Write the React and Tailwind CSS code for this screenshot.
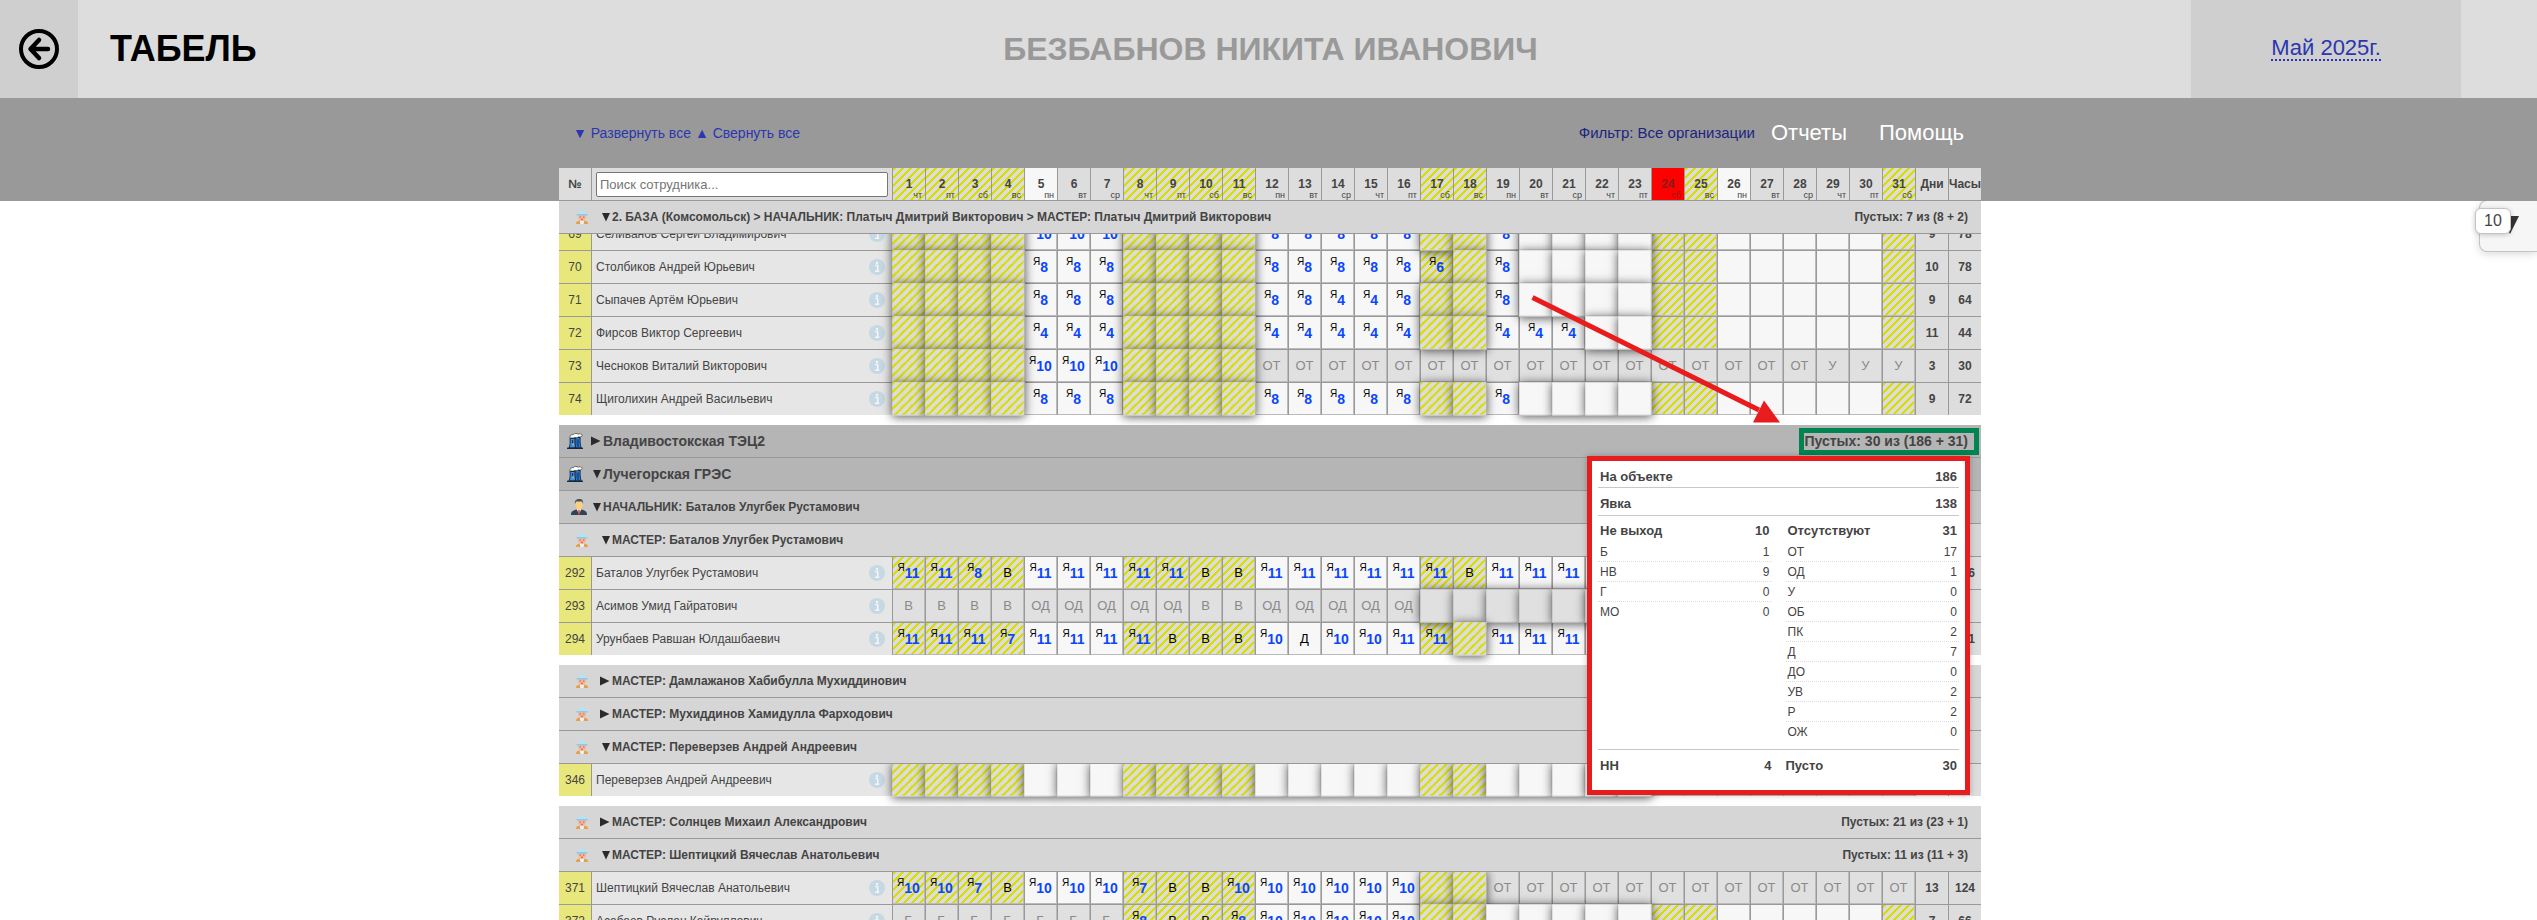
import React from "react";

const HATCH =
  "bg-[linear-gradient(135deg,#d9dd00_20%,#dddddd_20%,#dddddd_50%,#d9dd00_50%,#d9dd00_70%,#dddddd_70%)] bg-[length:8px_8px]";
const OFF_DAYS = [1, 2, 3, 4, 8, 9, 10, 11, 17, 18, 24, 25, 31];
const WEEK = ["пн", "вт", "ср", "чт", "пт", "сб", "вс"];
const DAYS = Array.from({ length: 31 }, (_, i) => i + 1);

const rep = (value, count) => Array(count).fill(value);

// Cell codes: number = hours worked, "*" = missing mark, "-" = future day,
// "~*" / "~" prefix = greyed out day, other letters = absence code.
const GROUP_A = [
  { n: 69, name: "Селиванов Сергей Владимирович", d: 9, h: 78, c: [...rep("*", 4), 10, 10, 10, ...rep("*", 4), ...rep(8, 5), "*", "*", 8, ...rep("*", 4), ...rep("-", 8)] },
  { n: 70, name: "Столбиков Андрей Юрьевич", d: 10, h: 78, c: [...rep("*", 4), 8, 8, 8, ...rep("*", 4), ...rep(8, 5), 6, "*", 8, ...rep("*", 4), ...rep("-", 8)] },
  { n: 71, name: "Сыпачев Артём Юрьевич", d: 9, h: 64, c: [...rep("*", 4), 8, 8, 8, ...rep("*", 4), 8, 8, 4, 4, 8, "*", "*", 8, ...rep("*", 4), ...rep("-", 8)] },
  { n: 72, name: "Фирсов Виктор Сергеевич", d: 11, h: 44, c: [...rep("*", 4), 4, 4, 4, ...rep("*", 4), ...rep(4, 5), "*", "*", 4, 4, 4, "*", "*", ...rep("-", 8)] },
  { n: 73, name: "Чесноков Виталий Викторович", d: 3, h: 30, c: [...rep("*", 4), 10, 10, 10, ...rep("*", 4), ...rep("~ОТ", 17), ...rep("~У", 3)] },
  { n: 74, name: "Щиголихин Андрей Васильевич", d: 9, h: 72, c: [...rep("*", 4), 8, 8, 8, ...rep("*", 4), ...rep(8, 5), "*", "*", 8, ...rep("*", 4), ...rep("-", 8)] },
];
const GROUP_B = [
  { n: 292, name: "Баталов Улугбек Рустамович", d: 19, h: 206, c: [11, 11, 8, "В", ...rep(11, 5), "В", "В", ...rep(11, 6), "В", ...rep(11, 5), ...rep("-", 8)] },
  { n: 293, name: "Асимов Умид Гайратович", d: 0, h: 0, c: [...rep("~В", 4), ...rep("~ОД", 5), "~В", "~В", ...rep("~ОД", 5), ...rep("~*", 7), ...rep("~", 8)] },
  { n: 294, name: "Урунбаев Равшан Юлдашбаевич", d: 18, h: 191, c: [11, 11, 11, 7, ...rep(11, 4), "В", "В", "В", 10, "Д", 10, 10, 11, 11, "*", ...rep(11, 5), ...rep("-", 8)] },
];
const GROUP_C = [
  { n: 346, name: "Переверзев Андрей Андреевич", d: 0, h: 0, c: [...rep("*", 23), ...rep("-", 8)] },
];
const GROUP_D = [
  { n: 371, name: "Шептицкий Вячеслав Анатольевич", d: 13, h: 124, c: [10, 10, 7, "В", 10, 10, 10, 7, "В", "В", ...rep(10, 6), "*", "*", ...rep("~ОТ", 13)] },
  { n: 372, name: "Асабаев Руслан Кайруллович", d: 7, h: 66, c: [...rep("~Б", 7), 8, "В", "В", 8, ...rep(10, 5), ...rep("*", 7), ...rep("-", 8)] },
];

function BackIcon() {
  return (
    <svg viewBox="0 0 42 42" className="h-[42px] w-[42px]" fill="none" stroke="#000" strokeLinecap="round" strokeLinejoin="round">
      <circle cx="21" cy="21" r="18" strokeWidth="4" />
      <path d="M30 21H13M21 12L12.500 21L21 30" strokeWidth="4.500" />
    </svg>
  );
}

function PlantIcon() {
  return (
    <svg viewBox="0 0 16 16" className="h-4 w-4">
      <path d="M2 15C3.200 12 3.400 9 3 5.500H8C7.700 9 8 12 9 15Z" fill="#3a92e8" stroke="#10243c" strokeWidth=".9" />
      <path d="M8.200 15C9 12 9 8 8.600 4.500H13.200C12.900 8 13.200 12 14.200 15Z" fill="#2a7ad2" stroke="#10243c" strokeWidth=".9" />
      <path d="M5.500 7V10M11 6.500V14" stroke="#0b3c80" strokeWidth="1.300" />
      <path d="M3 5.500C2.600 2.500 4.500 1.200 6.200 1.700C7.500 0 10 .2 11 1.200C12.500 .4 15 .8 15.200 2.300C14.800 4.200 12.500 4 11.500 3.800C10.500 5 8.800 4.800 8 4.200C6.500 5.800 4.500 4.200 3 5.500Z" fill="#fff" stroke="#222" strokeWidth=".6" />
      <path d="M0 15.300H16" stroke="#10243c" strokeWidth="1.300" />
      <circle cx="6.300" cy="11.500" r="1" fill="#e8a33a" />
    </svg>
  );
}

function ChiefIcon() {
  return (
    <svg viewBox="0 0 16 16" className="h-4 w-4">
      <path d="M0 16C0 12 2 11.500 5.500 10.500H10.500C14 11.500 16 12 16 16Z" fill="#2f4358" />
      <path d="M5.700 10L8 15.500L10.300 10Z" fill="#fff" />
      <path d="M7.300 11H8.700L9 15.500H7Z" fill="#d33c3c" />
      <path d="M4.500 3.500C4.500 1 11.500 1 11.500 3.500V6.500C11.500 9 9.500 11 8 11S4.500 9 4.500 6.500Z" fill="#f9cf80" />
      <path d="M4 5C3.400 1.500 5 0 8.500 0C11.500 0 12.600 2 12 5L11.200 2.600H5.200Z" fill="#45545e" />
    </svg>
  );
}

function WorkerIcon() {
  return (
    <svg viewBox="0 0 14 16" className="h-4 w-[14px]">
      <path d="M1 15C1 12.500 2.500 12 4.500 11.500L7 13.500L9.500 11.500C11.500 12 13 12.500 13 15Z" fill="#f39a2e" />
      <path d="M4.600 11.500L5.500 15H8.500L9.400 11.500Z" fill="#eef3f6" />
      <path d="M3.500 13V15M10.500 13V15" stroke="#9fb4c2" strokeWidth="1" />
      <path d="M3 6H11V8.500C11 10.800 8.800 12.300 7 12.300S3 10.800 3 8.500Z" fill="#f5b9a0" />
      <path d="M4.500 8H6M8 8H9.500M6 10.200H8" stroke="#d0553c" strokeWidth="1" />
      <path d="M2.500 5.500C2.500 3 4.500 2.200 5.800 2L6.500 .5H7.500L8.200 2C9.500 2.200 11.500 3 11.500 5.500Z" fill="#b4e3f6" />
      <path d="M1.500 5.800H12.500" stroke="#7cc6e6" strokeWidth="1.200" />
    </svg>
  );
}

function InfoIcon() {
  return (
    <svg viewBox="0 0 16 16" className="h-4 w-4">
      <circle cx="8" cy="8" r="8" fill="#c6d9e3" />
      <path d="M6.200 6.500H8.700V12M6 12.200H10.300" stroke="#f3f6f8" strokeWidth="1.500" fill="none" />
      <circle cx="8" cy="4" r="1.200" fill="#f3f6f8" />
    </svg>
  );
}

function Cols() {
  return (
    <colgroup>
      <col className="w-[33px]" />
      <col className="w-[301px]" />
      {DAYS.map((d) => (
        <col key={d} className="w-[33px]" />
      ))}
      <col className="w-[33px]" />
      <col className="w-8" />
    </colgroup>
  );
}

function DayCell({ code, day, last }) {
  const off = OFF_DAYS.includes(day);
  const grey = typeof code === "string" && code.startsWith("~");
  const mark = grey ? code.slice(1) : code;
  const bg = grey ? "bg-[#e0e0e0]" : off ? HATCH : "bg-[#f7f7f7]";
  const missing = mark === "*";
  const lift = missing ? "relative z-10 scale-105 shadow-[0_1px_9px_rgba(0,0,0,0.65)]" : "";
  return (
    <td className={`border-r border-[#999] p-0 ${last ? "" : "border-b"}`}>
      <div className={`flex h-8 w-8 items-center justify-center border-r border-b border-[#bbb] ${bg} ${lift}`}>
        {typeof mark === "number" ? (
          <span className="flex items-center">
            <span className="pb-[10px] text-[10px] leading-[14px] text-black">Я</span>
            <b className="pt-px text-[14px] leading-4 text-[#0a46ff]">{mark}</b>
          </span>
        ) : (
          !missing &&
          mark !== "-" && <span className={`text-[13px] leading-4 ${grey ? "text-[#8a8a8a]" : "text-black"}`}>{mark}</span>
        )}
      </div>
    </td>
  );
}

function PersonRow({ row, last }) {
  const b = last ? "" : "border-b";
  return (
    <tr className={last ? "h-8" : "h-[33px]"}>
      <td className={`border-r border-[#999] bg-[#e8e77c] p-0 text-center text-[12px] leading-4 ${b}`}>{row.n}</td>
      <td className={`border-r border-[#999] bg-[#e6e6e6] p-0 ${b}`}>
        <div className="flex items-center justify-between pr-[7px] pl-1 text-[12px] leading-4">
          <span>{row.name}</span>
          <button type="button" aria-label={`Сведения: ${row.name}`}>
            <InfoIcon />
          </button>
        </div>
      </td>
      {row.c.map((code, i) => (
        <DayCell key={i} code={code} day={i + 1} last={last} />
      ))}
      <td className={`border-r border-[#999] bg-[#ddd] p-0 text-center text-[12px] leading-4 font-bold ${b}`}>{row.d}</td>
      <td className={`border-[#999] bg-[#ddd] p-0 text-center text-[12px] leading-4 font-bold ${b}`}>{row.h}</td>
    </tr>
  );
}

const KINDS = {
  org: { bg: "bg-[#b5b5b5]", icon: <PlantIcon />, pad: "pl-2", size: "text-[14px]", iconBox: "w-6" },
  chief: { bg: "bg-[#c5c5c5]", icon: <ChiefIcon />, pad: "pl-3", size: "text-[12px]", iconBox: "w-5" },
  master: { bg: "bg-[#d6d6d6]", icon: <WorkerIcon />, pad: "pl-4", size: "text-[12px]", iconBox: "w-[25px]" },
};

function GroupHeading({ kind, title, open, note, children }) {
  const k = KINDS[kind];
  return (
    <div className={`relative flex h-[33px] items-center border-b border-[#999] pr-[13px] font-bold ${k.bg} ${k.pad} ${k.size} ${children ? "z-40" : "z-20"}`}>
      <button type="button" aria-expanded={open} className="flex items-center leading-4">
        <span className={`flex ${k.iconBox}`}>{k.icon}</span>
        <svg viewBox="0 0 12 10" className="h-[10px] w-3" fill="#2a2a2a">
          <path d={open ? "M2 1H10L6 9.500Z" : "M0 .5L9.500 5L0 9.500Z"} />
        </svg>
        <span>{title}</span>
      </button>
      {note && <span className="ml-auto leading-4">{note}</span>}
      {children}
    </div>
  );
}

function GroupRow(props) {
  return (
    <tr>
      <td colSpan={35} className="p-0">
        <GroupHeading {...props} />
      </td>
    </tr>
  );
}

function Gap() {
  return (
    <tr className="h-[10px]">
      <td colSpan={35} className="p-0" />
    </tr>
  );
}

const people = (rows, openEnd) =>
  rows.map((row, i) => <PersonRow key={row.n} row={row} last={!openEnd && i === rows.length - 1} />);

function SummaryList({ title, total, items }) {
  return (
    <dl className="flex-1">
      <div className="flex h-[26px] items-center justify-between px-0.5 pt-1 text-[13px] font-bold">
        <dt>{title}</dt>
        <dd>{total}</dd>
      </div>
      {items.map(([label, value], i) => (
        <div
          key={label}
          className={`flex h-5 items-center justify-between px-0.5 text-[12px] ${i < items.length - 1 ? "border-b border-dotted border-[#ddd]" : ""}`}
        >
          <dt>{label}</dt>
          <dd>{value}</dd>
        </div>
      ))}
    </dl>
  );
}

function SummaryPopup() {
  const line = "flex h-7 items-center justify-between border-b border-[#c8c8c8] px-0.5";
  return (
    <div className="absolute top-[31px] right-[11px] w-[383px] border-[5px] border-[#e81c1c] bg-white px-[6px] pt-[5px] pb-[9px] text-[13px] leading-4 font-normal shadow-[0_0_6px_rgba(0,0,0,0.25)]">
      <div className={`${line} h-[22px] font-bold`}>
        <span>На объекте</span>
        <span>186</span>
      </div>
      <div className={`${line} pt-1 font-bold`}>
        <span>Явка</span>
        <span>138</span>
      </div>
      <div className="flex min-h-[233px] gap-[14px]">
        <SummaryList title="Не выход" total="10" items={[["Б", 1], ["НВ", 9], ["Г", 0], ["МО", 0]]} />
        <SummaryList
          title="Отсутствуют"
          total="31"
          items={[["ОТ", 17], ["ОД", 1], ["У", 0], ["ОБ", 0], ["ПК", 2], ["Д", 7], ["ДО", 0], ["УВ", 2], ["Р", 2], ["ОЖ", 0]]}
        />
      </div>
      <div className="flex h-8 items-center gap-[14px] border-t border-[#c8c8c8] px-0.5 font-bold">
        <span className="flex flex-1 justify-between">
          <span>НН</span>
          <span>4</span>
        </span>
        <span className="flex flex-1 justify-between">
          <span>Пусто</span>
          <span>30</span>
        </span>
      </div>
    </div>
  );
}

function HeadDay({ day }) {
  const bg = day === 24 ? "bg-[#ff0000]" : OFF_DAYS.includes(day) ? HATCH : day === 5 || day === 26 ? "bg-[#f7f7f7]" : "bg-[#ddd]";
  const tone = day === 24 ? "text-[#8a1a1a]" : "";
  return (
    <th className={`border-r border-b border-[#999] p-0 ${bg} ${tone}`}>
      <div className="flex h-8 flex-col pt-2">
        <span className="text-[12px] leading-4">{day}</span>
        <span className="-mt-0.5 pr-[3px] text-right text-[9px] leading-[10px] font-normal">{WEEK[(day + 2) % 7]}</span>
      </div>
    </th>
  );
}

const FRAME = "mx-auto w-[1425px] pl-[3px]";
const TABLE = "w-[1422px] table-fixed border-separate border-spacing-0";

export default function App() {
  return (
    <div className="relative h-screen overflow-hidden bg-white font-['Liberation_Sans',sans-serif] text-[#444]">
      <header className="flex h-[98px] items-stretch bg-[#ddd]">
        <button type="button" aria-label="Назад" className="flex w-[78px] items-center justify-center bg-[#cfcfcf]">
          <BackIcon />
        </button>
        <div className="grid flex-1 grid-cols-[1fr_auto_1fr] items-center">
          <h1 className="pl-8 text-[36px] leading-10 font-bold text-black">ТАБЕЛЬ</h1>
          <div className="pl-[272px] text-[32px] leading-10 font-bold text-[#999]">БЕЗБАБНОВ НИКИТА ИВАНОВИЧ</div>
        </div>
        <div className="flex w-[270px] items-center justify-center bg-[#cfcfcf]">
          <a href="#month" className="border-b-2 border-dotted border-[#2b36b0] text-[22px] leading-[22px] text-[#2b36b0]">
            Май 2025г.
          </a>
        </div>
        <div className="w-[76px]" />
      </header>

      <div className="relative z-30 bg-[#999]">
        <div className={FRAME}>
          <div className="flex h-[70px] items-center pr-[17px] pl-[14px] text-[14px] leading-5 text-[#2b36b0]">
            <div className="flex gap-1">
              <button type="button">▼ Развернуть все</button>
              <button type="button">▲ Свернуть все</button>
            </div>
            <button type="button" className="ml-auto text-[15px] text-[#1d2480]">
              Фильтр: Все организации
            </button>
            <nav className="flex gap-8 pl-4 text-[22px] text-white">
              <a href="#reports">Отчеты</a>
              <a href="#help">Помощь</a>
            </nav>
          </div>
          <table className={TABLE}>
            <Cols />
            <thead>
              <tr className="h-[33px]">
                <th className="border-r border-b border-[#999] bg-[#ddd] p-0 text-[12px]">№</th>
                <th className="border-r border-b border-[#999] bg-[#ddd] p-0 px-1">
                  <input
                    type="text"
                    aria-label="Поиск сотрудника"
                    placeholder="Поиск сотрудника..."
                    className="block h-[25px] w-full rounded-[2px] border border-[#767676] bg-white px-[3px] text-[13px] font-normal placeholder:text-[#757575]"
                  />
                </th>
                {DAYS.map((d) => (
                  <HeadDay key={d} day={d} />
                ))}
                <th className="border-r border-b border-[#999] bg-[#ddd] p-0 text-[12px]">Дни</th>
                <th className="border-b border-[#999] bg-[#ddd] p-0 text-[12px]">Часы</th>
              </tr>
            </thead>
          </table>
        </div>
      </div>

      <main className={FRAME}>
        <div className="relative">
          <div className="relative z-30 -mb-4">
            <GroupHeading
              kind="master"
              open
              title="2. БАЗА (Комсомольск) > НАЧАЛЬНИК: Платыч Дмитрий Викторович > МАСТЕР: Платыч Дмитрий Викторович"
              note="Пустых: 7 из (8 + 2)"
            />
          </div>
          <table className={TABLE}>
            <Cols />
            <tbody>
              {people(GROUP_A)}
              <Gap />
              <GroupRow kind="org" title="Владивостокская ТЭЦ2" open={false} note="Пустых: 30 из (186 + 31)">
                <div className="absolute top-[3px] right-0.5 h-[27px] w-[180px] border-[5px] border-[#008552]" />
                <SummaryPopup />
              </GroupRow>
              <GroupRow kind="org" title="Лучегорская ГРЭС" open />
              <GroupRow kind="chief" title="НАЧАЛЬНИК: Баталов Улугбек Рустамович" open />
              <GroupRow kind="master" title="МАСТЕР: Баталов Улугбек Рустамович" open />
              {people(GROUP_B)}
              <Gap />
              <GroupRow kind="master" title="МАСТЕР: Дамлажанов Хабибулла Мухиддинович" open={false} />
              <GroupRow kind="master" title="МАСТЕР: Мухиддинов Хамидулла Фарходович" open={false} />
              <GroupRow kind="master" title="МАСТЕР: Переверзев Андрей Андреевич" open />
              {people(GROUP_C)}
              <Gap />
              <GroupRow kind="master" title="МАСТЕР: Солнцев Михаил Александрович" open={false} note="Пустых: 21 из (23 + 1)" />
              <GroupRow kind="master" title="МАСТЕР: Шептицкий Вячеслав Анатольевич" open note="Пустых: 11 из (11 + 3)" />
              {people(GROUP_D, true)}
            </tbody>
          </table>
          <svg viewBox="0 0 260 140" className="pointer-events-none absolute top-[89px] left-[966px] z-50 h-[140px] w-[260px]">
            <path d="M7.500 7.500L234 120" stroke="#e81c1c" strokeWidth="5" />
            <path d="M239 110.500L255 132.500H228Z" fill="#e81c1c" />
          </svg>
        </div>
      </main>

      <aside className="absolute top-[200px] right-0 z-20 h-[52px] w-[58px] rounded-l-lg border border-r-0 border-[#c4c4c4] bg-[#f6f6f6] shadow-[0_2px_8px_rgba(0,0,0,0.15)]">
        <svg viewBox="0 0 18 18" className="absolute top-[15px] left-[21px] h-[18px] w-[18px]">
          <path d="M0 0H18L9 18Z" fill="#333" />
        </svg>
        <button
          type="button"
          className="absolute top-[7px] -left-[5px] h-[26px] w-9 rounded-md border border-[#c4c4c4] bg-white text-[16px] leading-6 shadow-[0_1px_5px_rgba(0,0,0,0.2)]"
        >
          10
        </button>
      </aside>
    </div>
  );
}
